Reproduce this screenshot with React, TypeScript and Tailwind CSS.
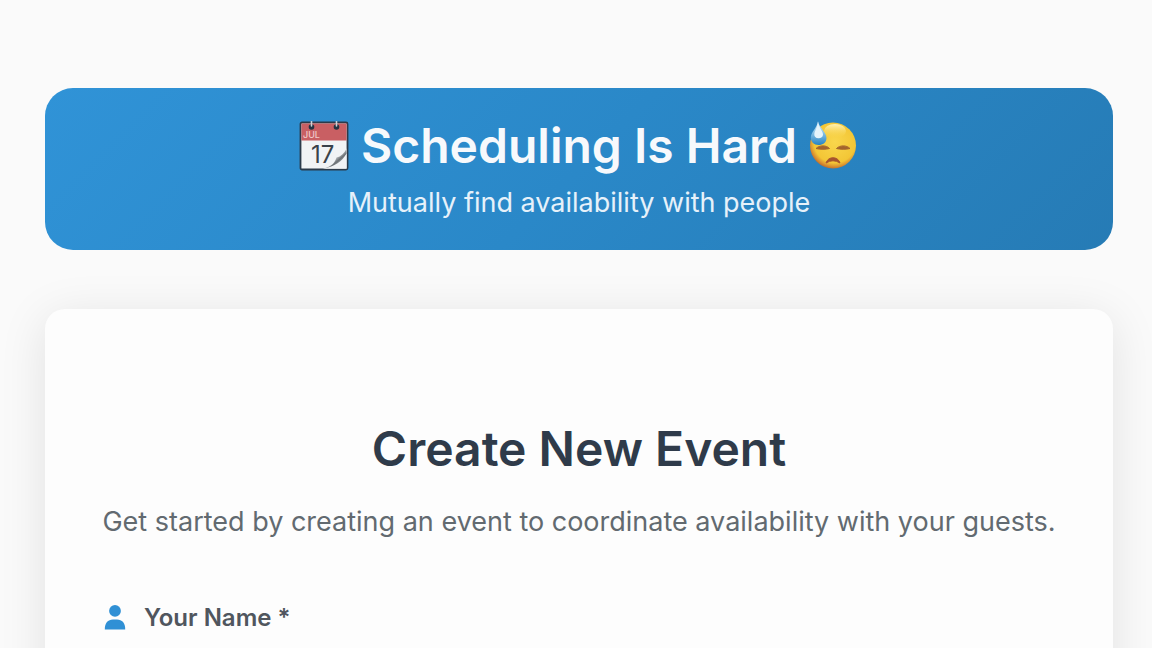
import React from "react";

function CalendarIcon() {
  return (
    <svg className="size-[50px] shrink-0" viewBox="0 0 50 50" aria-hidden="true">
      <defs>
        <linearGradient id="curl" x1="0" y1="0" x2="1" y2="1">
          <stop offset="0.3" stopColor="#f4f5f6" />
          <stop offset="0.5" stopColor="#b9bdc0" />
          <stop offset="0.62" stopColor="#6b7074" />
          <stop offset="0.85" stopColor="#e6e8ea" />
        </linearGradient>
      </defs>
      <rect x="1.5" y="1.5" width="47" height="47" rx="1.5" fill="#f1f3f5" stroke="#2b3a4a" strokeWidth="1.8" />
      <path d="M2.400 2.400h45.200v17H2.400z" fill="#c95f63" />
      <circle cx="12.5" cy="6" r="2.8" fill="#243342" />
      <circle cx="37.5" cy="6" r="2.8" fill="#243342" />
      <path d="M12.500 .5v4.500M37.500 .5v4.500" stroke="#cbd3d8" strokeWidth="1.6" strokeLinecap="round" />
      <text x="4" y="17" fontFamily="Inter, sans-serif" fontSize="9" fontWeight="500" fill="#f0c9ca">JUL</text>
      <text x="12" y="42" fontFamily="Inter, sans-serif" fontSize="24" fontWeight="400" fill="#39424a">17</text>
      <path d="M24 47.700C33 45.500 36 41.500 37.500 36.500C42 35.500 45 32.500 47.600 27.500V47.700Z" fill="#f1f3f5" />
      <path d="M24 47.700C33 45.500 36 41.500 37.500 36.500C42 35.500 45 32.500 47.600 27.500V32.500C43 40.500 36 45.500 24 47.700Z" fill="url(#curl)" />
    </svg>
  );
}

function SweatFaceIcon() {
  return (
    <svg className="size-[50px] shrink-0" viewBox="0 0 50 50" aria-hidden="true">
      <defs>
        <radialGradient id="face" cx="0.54" cy="0.42" r="0.6">
          <stop offset="0" stopColor="#f9d64c" />
          <stop offset="0.76" stopColor="#f3c636" />
          <stop offset="0.88" stopColor="#dd9731" />
          <stop offset="1" stopColor="#b9652c" />
        </radialGradient>
        <linearGradient id="shine" x1="0" y1="0" x2="0" y2="1">
          <stop offset="0" stopColor="#fff2b6" />
          <stop offset="1" stopColor="#f9d64c" stopOpacity="0" />
        </linearGradient>
        <linearGradient id="drop" x1="0" y1="0" x2="0" y2="1">
          <stop offset="0" stopColor="#d9edf8" />
          <stop offset="0.45" stopColor="#8fc6e8" />
          <stop offset="1" stopColor="#2684c4" />
        </linearGradient>
      </defs>
      <circle cx="24" cy="24.5" r="23" fill="url(#face)" />
      <ellipse cx="26" cy="10" rx="11" ry="7" fill="url(#shine)" />
      <path d="M9 .2C9.700 6 17.500 11 17.500 17C17.500 21.500 14 24 9.500 24C5 24 1.800 21 1.800 16.500C1.800 11 8 7 9 .2Z" fill="url(#drop)" />
      <path d="M9 .8C9.500 6.500 14 10 14 13.500C14 16 12 17.200 9.500 17.200C6.800 17.200 5 15.500 5.300 13C5.700 10 8.500 6.500 9 .8Z" fill="#e6f4fb" />
      <path d="M7 27.500C10.500 24 17.500 24 20.500 27.500C17.500 28.500 10.500 28.500 7 27.500ZM27.500 27.500C31 24 37.500 24 41 27.500C37.500 28.500 31 28.500 27.500 27.500Z" fill="#a3642c" stroke="#a3642c" />
      <path d="M17 42C19 35 29 35 31 42Q24 37.500 17 42Z" fill="#a6532e" stroke="#a6532e" strokeLinejoin="round" />
    </svg>
  );
}

function PersonIcon() {
  return (
    <svg className="h-[26px] w-[22px] shrink-0" viewBox="0 0 22 26" fill="#3090d5" aria-hidden="true">
      <circle cx="11" cy="5.9" r="5.9" />
      <path d="M.8 24.500C.6 18 4 14.500 9 14.500H13C18 14.500 21.400 18 21.200 24.500Z" />
    </svg>
  );
}

export default function App() {
  return (
    <div className="h-screen overflow-hidden bg-[#fafafa] pt-[88px] pr-[39px] pl-[45px] font-['Inter',sans-serif]">
      <header className="flex flex-col items-center rounded-[28px] bg-linear-135 from-[#3093d7] via-[#2a88c8] to-[#267bb5] pt-[26px] pb-[29px]">
        <h1 className="flex h-16 items-center gap-3 text-[48px] leading-[64px] font-semibold whitespace-nowrap text-[#f7f9fc]">
          <CalendarIcon />
          Scheduling Is Hard
          <SweatFaceIcon />
        </h1>
        <p className="mt-[7px] text-[27px] leading-9 text-[#e6f1fa]">Mutually find availability with people</p>
      </header>
      <main className="mt-[59px] rounded-[20px] bg-[#fdfdfd] px-14 pt-[109px] pb-14 shadow-[0_8px_48px_rgba(0,0,0,0.1)]">
        <h2 className="text-center text-[48px] leading-[62px] font-semibold text-[#2f3b4a]">Create New Event</h2>
        <p className="mt-6 text-center text-[27px] leading-9 text-[#626a70]">
          Get started by creating an event to coordinate availability with your guests.
        </p>
        <form className="mt-[62px]">
          <label htmlFor="name" className="flex items-center gap-[18px] pl-[3px] text-[24px] leading-8 font-semibold text-[#50565e]">
            <PersonIcon />
            Your Name *
          </label>
          <input
            id="name"
            type="text"
            required
            className="mt-6 block h-20 w-full rounded-2xl border-2 border-[#e1e5e9] bg-white px-6 text-[24px] text-[#2f3b4a]"
          />
        </form>
      </main>
    </div>
  );
}
